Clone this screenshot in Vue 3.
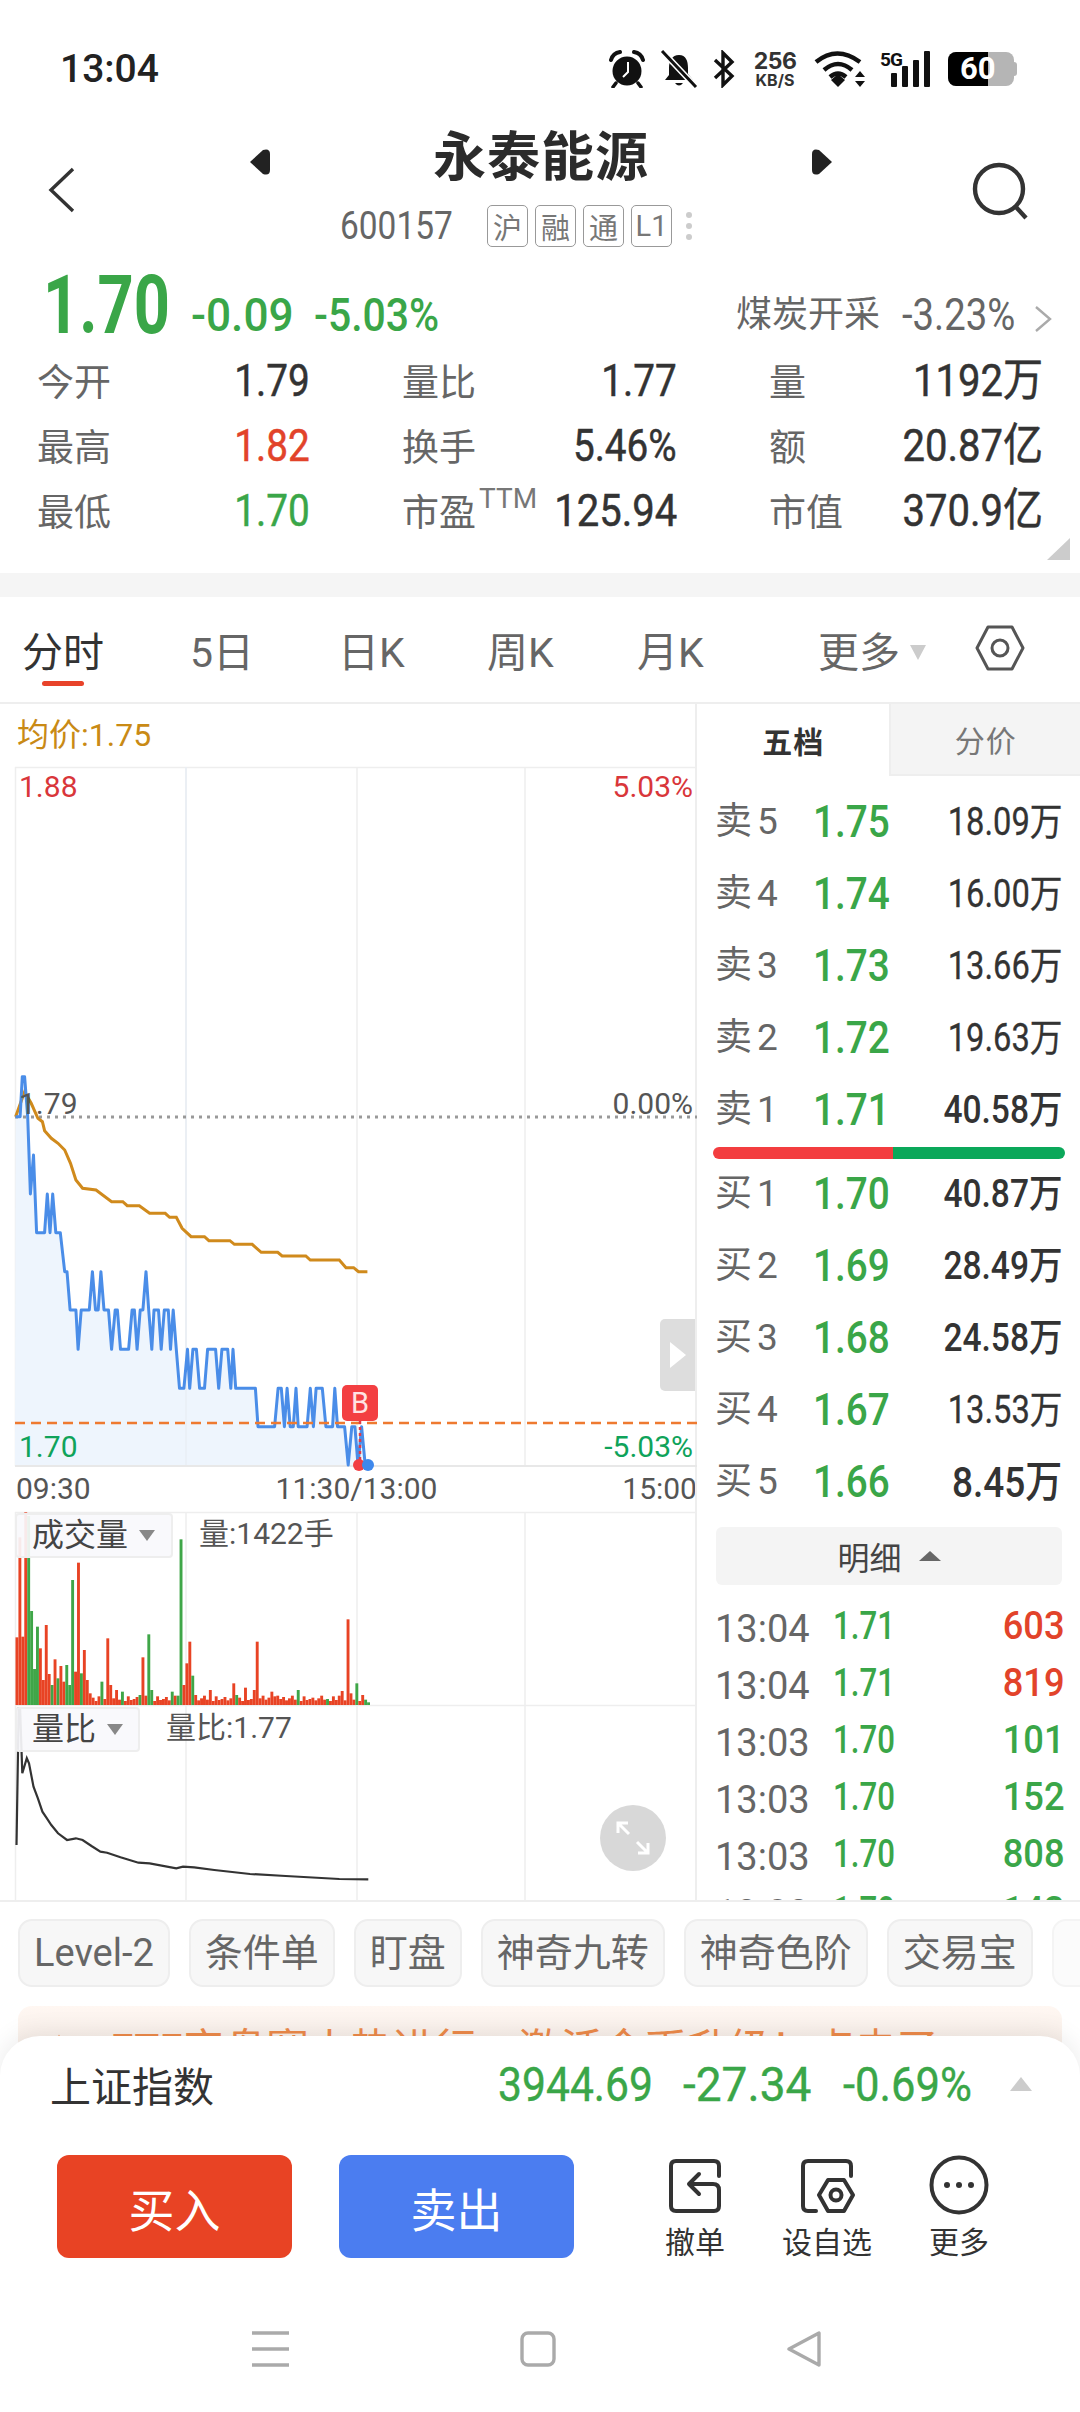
<template>
  <div class="page">
    <!-- 状态栏 -->
    <div class="status">
      <span class="clock">13:04</span>
      <div class="status-icons">
        <svg width="38" height="38" viewBox="0 0 38 38">
          <circle cx="19" cy="21" r="14.5" fill="#111" />
          <path d="M3 10 Q5 3 12 2 M35 10 Q33 3 26 2" fill="none" stroke="#111" stroke-width="4" stroke-linecap="round" />
          <path d="M8 33 l-3 4 M30 33 l3 4" stroke="#111" stroke-width="3.5" stroke-linecap="round" />
          <path d="M20 12 V22 L15 27" fill="none" stroke="#fff" stroke-width="2" />
        </svg>
        <svg width="38" height="38" viewBox="0 0 38 38">
          <path d="M19 5 C26 5 28 11 28 18 L28 24 L33 30 H5 L9 25 L9 18 C9 11 12 5 19 5 Z" fill="#111" />
          <path d="M15 33 H23 Q19 38 15 33 Z" fill="#111" />
          <path d="M2 1 L36 37" stroke="#fff" stroke-width="6" />
          <path d="M2 1 L36 37" stroke="#111" stroke-width="3" />
        </svg>
        <svg width="24" height="38" viewBox="0 0 24 38">
          <path d="M3 10 L20 26 L11 35 V3 L20 12 L3 28" fill="none" stroke="#111" stroke-width="3.4" />
        </svg>
        <div class="speed"><b>256</b><i>KB/S</i></div>
        <svg width="52" height="38" viewBox="0 0 52 38">
          <path d="M2 12 Q23 -5 46 12 M10 20 Q24 8 38 20 M16 27 Q24 20 32 27" fill="none" stroke="#111" stroke-width="4.4" />
          <path d="M17 30 L24 24 L31 30 L24 37 Z" fill="#111" />
          <path d="M41 27 L46 21 L51 27 Z M41 31 H51 L46 37 Z" fill="#111" />
        </svg>
        <div class="signal">
          <span class="five-g">5G</span>
          <svg width="40" height="36" viewBox="0 0 40 36">
            <rect x="1" y="22" width="6" height="14" rx="1" fill="#111" />
            <rect x="12" y="15" width="6" height="21" rx="1" fill="#111" />
            <rect x="23" y="9" width="6" height="27" rx="1" fill="#111" />
            <rect x="34" y="0" width="6" height="36" rx="1" fill="#111" />
          </svg>
        </div>
        <div class="battery">
          <div class="battery-fill"></div>
          <span>60</span>
          <i class="battery-cap"></i>
        </div>
      </div>
    </div>

    <!-- 标题 -->
    <div class="head">
      <svg class="back" width="28" height="46" viewBox="0 0 28 46">
        <path d="M25 2 L3 23 L25 44" fill="none" stroke="#333" stroke-width="3.4" />
      </svg>
      <div class="head-mid">
        <div class="title-row">
          <svg class="flip" width="22" height="26" viewBox="0 0 22 26"><path d="M1 13 L14 1 Q21 -1 21 5 V21 Q21 27 14 25 Z" fill="#222" /></svg>
          <span class="title">永泰能源</span>
          <svg class="flip" width="22" height="26" viewBox="0 0 22 26"><path d="M21 13 L8 1 Q1 -1 1 5 V21 Q1 27 8 25 Z" fill="#222" /></svg>
        </div>
        <div class="code-row">
          <span class="fit code"><span>600157</span></span>
          <span v-for="t in tags" :key="t" class="tag">{{ t }}</span>
          <span class="dots"><i></i><i></i><i></i></span>
        </div>
      </div>
      <svg class="search" width="58" height="58" viewBox="0 0 58 58">
        <circle cx="27" cy="27" r="24" fill="none" stroke="#333" stroke-width="4.4" />
        <path d="M43 44 L54 56" stroke="#333" stroke-width="4.4" />
      </svg>
    </div>

    <!-- 价格 -->
    <div class="quote">
      <span class="fit price-big"><span>1.70</span></span>
      <span class="chg first">-0.09</span>
      <span class="fit chg pct"><span>-5.03%</span></span>
      <span class="sector">煤炭开采</span>
      <span class="fit sector-chg"><span>-3.23%</span></span>
      <svg width="18" height="26" viewBox="0 0 18 26">
        <path d="M2 1 L16 13 L2 25" fill="none" stroke="#aaa" stroke-width="2.4" />
      </svg>
    </div>

    <div class="stats">
      <div v-for="s in stats" :key="s.k" class="stat">
        <span class="stat-k">{{ s.k }}<sup v-if="s.sup">{{ s.sup }}</sup></span>
        <span class="stat-v" :class="s.c">{{ s.v }}</span>
      </div>
      <i class="corner"></i>
    </div>
    <div class="band"></div>

    <!-- 周期切换 -->
    <div class="tabs">
      <span v-for="t in periods" :key="t.n" class="tab" :class="{ on: t.on }" :style="{ width: t.w + 'px' }">{{ t.n }}</span>
      <i class="more-arrow"></i>
      <svg class="hex" width="50" height="46" viewBox="0 0 50 46">
        <path d="M13 2 H37 L48 23 L37 44 H13 L2 23 Z" fill="none" stroke="#555" stroke-width="3" stroke-linejoin="round" />
        <circle cx="25" cy="23" r="8" fill="none" stroke="#555" stroke-width="3" />
      </svg>
    </div>

    <div class="market">
      <!-- 左侧分时 -->
      <div class="left">
        <div class="avg">均价:1.75</div>
        <div class="pane main">
          <svg width="697" height="700" viewBox="0 0 697 700">
            <path d="M15.500 0 V699 M186 0 V699 M357 0 V699 M525 0 V699 M15 .5 H697" stroke="#eee" stroke-width="1.500" fill="none" />
            <path :d="priceFill" fill="#eef5fd" />
            <path d="M186 0 V699" stroke="#e8eef5" stroke-width="1.500" />
            <path d="M15 699 H697" stroke="#e8e8e8" stroke-width="2" />
            <path d="M15 350 H697" stroke="#999" stroke-width="3" stroke-dasharray="3 5" />
            <path :d="avgPath" fill="none" stroke="#d08a1c" stroke-width="3" />
            <path :d="pricePath" fill="none" stroke="#4a8de8" stroke-width="3" stroke-linejoin="round" />
            <path d="M15 656 H697" stroke="#ee7a30" stroke-width="2.400" stroke-dasharray="10 6" />
            <path d="M360 654 V698" stroke="#e23a48" stroke-width="2.500" stroke-dasharray="3 3" />
            <circle cx="359" cy="698" r="6" fill="#f33f42" />
            <circle cx="368" cy="698" r="6" fill="#3f88ec" />
          </svg>
          <span class="lb l red" style="top: 3px">1.88</span>
          <span class="lb r red" style="top: 3px">5.03%</span>
          <span class="lb l gray" style="top: 320px">1.79</span>
          <span class="lb r gray" style="top: 320px">0.00%</span>
          <span class="lb l green" style="top: 663px">1.70</span>
          <span class="lb r green" style="top: 663px">-5.03%</span>
          <span class="b-mark">B</span>
          <span class="side-arrow"><i></i></span>
        </div>
        <div class="times"><span>09:30</span><span>11:30/13:00</span><span>15:00</span></div>
        <div class="pane vol">
          <svg width="697" height="194" viewBox="0 0 697 194">
            <path d="M15.500 0 V194 M186 0 V194 M357 0 V194 M525 0 V194 M15 .5 H697 M15 193.500 H697" stroke="#eee" stroke-width="1.500" fill="none" />
            <rect v-for="b in bars" :key="b.x" :x="b.x" :y="193 - b.h" width="2.900" :height="b.h" :fill="b.c" />
          </svg>
          <div class="legend vol-lg">成交量<i></i></div>
          <span class="legend-val" style="left: 199px">量:1422手</span>
        </div>
        <div class="pane ratio">
          <svg width="697" height="194" viewBox="0 0 697 194">
            <path d="M15.500 0 V194 M186 0 V194 M357 0 V194 M525 0 V194" stroke="#eee" stroke-width="1.500" fill="none" />
            <path :d="ratioPath" fill="none" stroke="#333" stroke-width="2.200" />
          </svg>
          <div class="legend ratio-lg">量比<i></i></div>
          <span class="legend-val" style="left: 166px">量比:1.77</span>
          <span class="expand">
            <svg width="36" height="36" viewBox="0 0 36 36">
              <path d="M3 13 V3 H13 M3 3 L14 14 M33 23 V33 H23 M33 33 L22 22" fill="none" stroke="#fff" stroke-width="3" />
            </svg>
          </span>
        </div>
      </div>

      <!-- 右侧盘口 -->
      <div class="right">
        <div class="book-tabs">
          <span class="bt on">五档</span>
          <span class="bt">分价</span>
        </div>
        <div v-for="r in asks" :key="r.l" class="lv">
          <span class="lv-l">{{ r.l }}</span><span class="lv-p">{{ r.p }}</span><span class="lv-q" :class="r.s">{{ r.q }}</span>
        </div>
        <div class="pk"></div>
        <div v-for="r in bids" :key="r.l" class="lv">
          <span class="lv-l">{{ r.l }}</span><span class="lv-p">{{ r.p }}</span><span class="lv-q" :class="r.s">{{ r.q }}</span>
        </div>
        <div class="detail">明细<i></i></div>
        <div v-for="(t, i) in ticks" :key="i" class="tick">
          <span class="tk-t">{{ t.t }}</span><span class="tk-p">{{ t.p }}</span><span class="tk-v" :class="t.c">{{ t.v }}</span>
        </div>
      </div>
    </div>

    <div class="chips">
      <span v-for="c in chips" :key="c" class="chip">{{ c }}</span>
      <span class="chip ghost"></span>
    </div>

    <div class="banner">
      <svg width="44" height="40" viewBox="0 0 44 40">
        <path d="M4 30 L14 8 L24 30 M14 8 V36" fill="none" stroke="#ee8a4a" stroke-width="3" />
      </svg>
      <span>ETF实盘赛火热进行，激活金币升级！点击了</span>
      <span class="banner-x">×</span>
    </div>

    <!-- 底部面板 -->
    <div class="sheet">
      <div class="index">
        <span class="index-name">上证指数</span>
        <span class="fit iv1"><span>3944.69</span></span>
        <span class="fit iv2"><span>-27.34</span></span>
        <span class="fit iv3"><span>-0.69%</span></span>
        <i class="index-arrow"></i>
      </div>
      <div class="actions">
        <span class="btn buy">买入</span>
        <span class="btn sell">卖出</span>
        <div class="act a1">
          <svg width="56" height="56" viewBox="0 0 56 56">
            <path d="M52 18 V8 Q52 3 47 3 H9 Q4 3 4 8 V48 Q4 53 9 53 H47 Q52 53 52 48 V32 Q52 26 46 26 H24 M32 16 L22 26 L32 36" fill="none" stroke="#333" stroke-width="4" stroke-linecap="round" stroke-linejoin="round" />
          </svg>
          <span>撤单</span>
        </div>
        <div class="act a2">
          <svg width="56" height="56" viewBox="0 0 56 56">
            <path d="M52 18 V8 Q52 3 47 3 H9 Q4 3 4 8 V48 Q4 53 9 53 H17" fill="none" stroke="#333" stroke-width="4" stroke-linecap="round" />
            <path d="M29 22 H45 L54 37 L45 53 H29 L20 37 Z" fill="none" stroke="#333" stroke-width="4" stroke-linejoin="round" />
            <circle cx="37" cy="37" r="5.500" fill="none" stroke="#333" stroke-width="4" />
          </svg>
          <span>设自选</span>
        </div>
        <div class="act a3">
          <svg width="60" height="60" viewBox="0 0 60 60">
            <circle cx="30" cy="30" r="27.500" fill="none" stroke="#333" stroke-width="4" />
            <circle cx="18" cy="30" r="3" fill="#333" /><circle cx="30" cy="30" r="3" fill="#333" /><circle cx="42" cy="30" r="3" fill="#333" />
          </svg>
          <span>更多</span>
        </div>
      </div>
      <div class="nav">
        <svg width="38" height="36" viewBox="0 0 38 36"><path d="M0 2 H37 M0 18 H37 M0 34 H37" stroke="#aaa" stroke-width="3.400" /></svg>
        <svg width="38" height="36" viewBox="0 0 38 36"><rect x="3" y="2" width="32" height="32" rx="6" fill="none" stroke="#aaa" stroke-width="3.400" /></svg>
        <svg width="38" height="36" viewBox="0 0 38 36"><path d="M34 2 V34 L4 18 Z" fill="none" stroke="#aaa" stroke-width="3.400" stroke-linejoin="round" /></svg>
      </div>
    </div>
  </div>
</template>

<script setup>
const tags = ['沪', '融', '通', 'L1']

const stats = [
  { k: '今开', v: '1.79' },
  { k: '量比', v: '1.77' },
  { k: '量', v: '1192万', c: 'w' },
  { k: '最高', v: '1.82', c: 'red' },
  { k: '换手', v: '5.46%' },
  { k: '额', v: '20.87亿', c: 'w' },
  { k: '最低', v: '1.70', c: 'green' },
  { k: '市盈', sup: 'TTM', v: '125.94', c: 'w' },
  { k: '市值', v: '370.9亿', c: 'w' },
]

const periods = [
  { n: '分时', w: 168, on: true },
  { n: '5日', w: 148 },
  { n: '日K', w: 149 },
  { n: '周K', w: 150 },
  { n: '月K', w: 181 },
  { n: '更多', w: 92 },
]

const asks = [
  { l: '卖5', p: '1.75', q: '18.09万' },
  { l: '卖4', p: '1.74', q: '16.00万' },
  { l: '卖3', p: '1.73', q: '13.66万' },
  { l: '卖2', p: '1.72', q: '19.63万' },
  { l: '卖1', p: '1.71', q: '40.58万', s: 'wide' },
]
const bids = [
  { l: '买1', p: '1.70', q: '40.87万', s: 'wide' },
  { l: '买2', p: '1.69', q: '28.49万', s: 'wide' },
  { l: '买3', p: '1.68', q: '24.58万', s: 'wide' },
  { l: '买4', p: '1.67', q: '13.53万' },
  { l: '买5', p: '1.66', q: '8.45万', s: 'big' },
]
const ticks = [
  { t: '13:04', p: '1.71', v: '603', c: 'red' },
  { t: '13:04', p: '1.71', v: '819', c: 'red' },
  { t: '13:03', p: '1.70', v: '101', c: 'green' },
  { t: '13:03', p: '1.70', v: '152', c: 'green' },
  { t: '13:03', p: '1.70', v: '808', c: 'green' },
  { t: '13:03', p: '1.70', v: '143', c: 'green' },
]

const chips = ['Level-2', '条件单', '盯盘', '神奇九转', '神奇色阶', '交易宝']

// 折线点是从参考图量出来的，x 按 2.24 倍、y 按 3 倍记录
const priceRaw = [
  [35, 230], [45, 230], [50, 110], [55, 110], [62, 230], [68, 462], [75, 345], [82, 578], [100, 578],
  [106, 462], [112, 578], [118, 462], [125, 578], [135, 578], [145, 695], [150, 695], [157, 810], [170, 810],
  [175, 928], [182, 810], [200, 810], [207, 695], [214, 810], [220, 810], [226, 695], [233, 810], [243, 810],
  [250, 928], [258, 810], [263, 810], [270, 928], [288, 928], [296, 810], [301, 810], [307, 928], [314, 810],
  [320, 810], [327, 695], [333, 810], [340, 928], [345, 810], [355, 810], [361, 928], [368, 810], [377, 810],
  [382, 928], [388, 810], [395, 928], [402, 1045], [412, 1045], [420, 928], [425, 1045], [432, 928], [440, 928],
  [447, 1045], [458, 1045], [465, 928], [483, 928], [490, 1045], [497, 928], [510, 928], [517, 1045], [522, 928],
  [528, 1045], [572, 1045], [578, 1160], [615, 1160], [623, 1045], [630, 1045], [637, 1160], [643, 1045],
  [650, 1160], [657, 1160], [663, 1045], [668, 1160], [688, 1160], [695, 1045], [702, 1160], [708, 1045],
  [722, 1045], [730, 1160], [745, 1160], [750, 1045], [756, 1160], [772, 1160], [780, 1275], [788, 1160],
  [795, 1160], [802, 1275], [810, 1160], [818, 1275], [825, 1275],
]
const avgRaw = [
  [35, 230], [55, 155], [70, 190], [85, 235], [95, 245], [100, 272], [115, 295], [130, 310], [145, 330],
  [158, 370], [170, 420], [185, 445], [215, 450], [250, 485], [275, 485], [285, 497], [312, 497], [335, 520],
  [370, 520], [380, 532], [395, 532], [408, 565], [428, 590], [458, 590], [468, 602], [515, 602], [525, 613],
  [565, 613], [585, 637], [622, 637], [632, 648], [685, 648], [695, 660], [760, 660], [775, 683], [792, 683],
  [803, 695], [823, 695],
]
const ratioRaw = [
  [37, 1065], [42, 655], [45, 655], [50, 850], [60, 805], [65, 820], [75, 890], [85, 925], [95, 965], [105, 985],
  [115, 1005], [130, 1030], [150, 1050], [170, 1045], [185, 1050], [205, 1068], [225, 1085], [240, 1088],
  [270, 1102], [310, 1118], [335, 1120], [395, 1135], [410, 1130], [435, 1132], [480, 1140], [560, 1152],
  [640, 1158], [760, 1167], [825, 1168],
]

const toPath = (pts, offset) =>
  pts.map((p, i) => `${i ? 'L' : 'M'}${(p[0] / 2.24).toFixed(1)} ${(offset + p[1] / 3).toFixed(1)}`).join(' ')

const pricePath = toPath(priceRaw, 273)
const avgPath = toPath(avgRaw, 273)
const priceFill = `${pricePath} L368 699 L15 699 Z`
// 量比面板从 1706 开始
const ratioPath = toPath(ratioRaw, 1490 - 1706)

// 成交量柱，高度按 3 倍记录，负数是绿柱
const volHead = [
  203, 503, 205, 578, -567, -282, -108, -235, 170, 75, 240, 93, -60, 137, -80, 117, 70, -120, -60, -375,
  100, 427, -95, 165, 75, 35,
]
const small = [18, 24, 14, 20, 28, 16, 22, 12, 26, 15]
const spikes = [
  [225, -70], [238, 200], [245, 60], [255, 45], [268, -40], [308, -30], [318, 143], [332, -212], [340, -45],
  [383, -40], [395, -28], [403, -497], [408, 60], [415, 125], [421, 190], [428, -88], [434, 30], [470, 45],
  [520, 65], [528, -30], [546, 52], [565, 45], [573, 190], [604, 40], [620, 28], [667, -45], [700, 22],
  [730, -18], [755, 28], [765, 42], [775, 257], [785, 35], [799, -65], [808, 30], [818, -16], [825, -8],
]
const volRaw = Array.from({ length: 121 }, (_, i) => volHead[i] ?? small[i % 10])
spikes.forEach(([zx, h]) => {
  volRaw[Math.round((zx - 35) / 6.56)] = h
})
const bars = volRaw.map((v, i) => ({
  x: +(15.5 + i * 2.93).toFixed(2),
  h: Math.abs(v) / 3,
  c: v < 0 ? '#3fa648' : '#e84324',
}))
</script>

<style>
html, body { margin: 0; background: #fff; }
</style>

<style scoped>
.page {
  position: relative;
  width: 1080px;
  height: 2412px;
  overflow: hidden;
  background: #fff;
  color: #333;
  font-family: Roboto, "Noto Sans CJK SC", sans-serif;
}

/* 参考图的数字字体偏窄，这里用 scaleX 压一下，外层盒子给压缩后的宽度 */
.fit { display: inline-block; white-space: nowrap; flex: none; }
.fit > span { display: inline-block; transform-origin: 0 50%; }

.status {
  height: 100px;
  box-sizing: border-box;
  padding: 46px 66px 0 60px;
  display: flex;
  justify-content: space-between;
  align-items: flex-start;
}
.clock { font-size: 39px; font-weight: 500; line-height: 46px; color: #222; }
.status-icons { display: flex; align-items: center; gap: 14px; height: 46px; }
.speed { display: flex; flex-direction: column; align-items: center; width: 50px; font-family: Inter, Roboto, sans-serif; }
.speed b { font-size: 23px; line-height: 21px; font-weight: 700; letter-spacing: -.5px; }
.speed i { font-size: 16px; line-height: 16px; font-style: normal; font-weight: 700; }
.signal { width: 50px; position: relative; height: 38px; }
.five-g { position: absolute; left: 0; top: 1px; font-size: 19px; font-weight: 700; color: #111; line-height: 18px; letter-spacing: -1px; }
.signal svg { display: block; margin-left: 10px; margin-top: 1px; }
.battery { position: relative; width: 66px; height: 34px; background: #b5b5b5; border-radius: 8px; margin-left: 4px; }
.battery-fill { position: absolute; left: 0; top: 0; bottom: 0; width: 40px; background: #000; border-radius: 8px 0 0 8px; }
.battery span { position: absolute; left: 12px; top: 0; line-height: 34px; font-size: 31px; font-weight: 700; color: #fff; }
.battery-cap { position: absolute; right: -3px; top: 10px; width: 3px; height: 14px; background: #b5b5b5; border-radius: 0 3px 3px 0; }

.head { display: flex; height: 147px; box-sizing: border-box; padding: 28px 50px 0 48px; }
.back { margin-top: 39px; flex: none; }
.search { margin-top: 34px; flex: none; }
.head-mid { flex: 1; display: flex; flex-direction: column; align-items: center; padding-left: 34px; }
.title-row { display: flex; align-items: center; justify-content: space-between; width: 584px; height: 60px; }
.flip { margin-top: 8px; }
.title { font-size: 53px; font-weight: 700; letter-spacing: 1px; color: #2b2b2b; line-height: 60px; }
.code-row { display: flex; align-items: center; gap: 7px; margin-top: 17px; height: 42px; margin-right: 50px; }
.code { width: 113px; margin-right: 27px; font-size: 38px; color: #666; }
.code > span { transform: scaleX(.88); }
.tag {
  width: 41px; height: 42px; box-sizing: border-box;
  border: 1.500px solid #999; border-radius: 5px;
  display: flex; align-items: center; justify-content: center;
  font-size: 29px; color: #777;
}
.dots { display: flex; flex-direction: column; gap: 5px; margin-left: 7px; }
.dots i { width: 6px; height: 6px; border-radius: 50%; background: #ccc; }

.quote {
  display: flex; align-items: flex-end;
  height: 100px; box-sizing: border-box;
  padding: 0 28px 0 43px;
}
.price-big { width: 127px; font-size: 82px; line-height: 84px; font-weight: 700; color: #3aa648; }
.price-big > span { transform: scaleX(.77); }
.chg { font-size: 46px; font-weight: 500; line-height: 54px; color: #3aa648; margin-left: 21px; margin-bottom: 5px; }
.chg.first { transform: scaleX(.96); transform-origin: 0 50%; margin-right: -4px; }
.chg.pct { width: 125px; margin-left: 20px; }
.chg.pct > span { transform: scaleX(.89); }
.sector { margin-left: auto; font-size: 36px; color: #666; line-height: 54px; margin-bottom: 5px; }
.sector-chg { width: 114px; font-size: 44px; color: #666; line-height: 54px; margin: 0 18px 5px 22px; }
.sector-chg > span { transform: scaleX(.87); }
.quote svg { margin-bottom: 15px; }

.stats {
  position: relative;
  display: grid;
  grid-template-columns: 273px 367px 1fr;
  grid-auto-rows: 65px;
  height: 226px;
  padding: 1px 37px 0 37px;
  box-sizing: border-box;
  width: 1080px;
}
.stat { display: flex; justify-content: space-between; align-items: center; }
.stat:nth-child(3n + 2), .stat:nth-child(3n) { padding-left: 92px; }
.stat-k { font-size: 37px; line-height: 46px; color: #666; position: relative; top: 3px; white-space: nowrap; }
.stat-k sup { font-size: 28px; line-height: 0; vertical-align: 18px; margin-left: 3px; color: #777; }
.stat-v {
  font-size: 45px; line-height: 50px; color: #333; white-space: nowrap;
  transform: scaleX(.86); transform-origin: 100% 50%;
  -webkit-text-stroke: .5px currentColor;
}
.stat-v.w { transform: scaleX(.89); }
.corner {
  position: absolute; right: 10px; bottom: 13px; width: 0; height: 0;
  border-left: 23px solid transparent; border-bottom: 22px solid #ccc;
}
.band { height: 24px; background: #f5f5f5; }

.tabs {
  position: relative;
  height: 107px; box-sizing: border-box;
  border-bottom: 2px solid #eee;
  display: flex; align-items: flex-start;
  padding: 33px 0 0 22px;
}
.tab { font-size: 41px; line-height: 46px; color: #666; flex: none; }
.tab.on { color: #333; position: relative; }
.tab.on::after {
  content: ""; position: absolute; left: 20px; top: 51px;
  width: 42px; height: 5px; border-radius: 3px; background: #e8432a;
}
.more-arrow {
  width: 0; height: 0; margin-top: 15px;
  border-left: 8px solid transparent; border-right: 8px solid transparent; border-top: 15px solid #ccc;
}
.hex { position: absolute; left: 975px; top: 28px; }

.market { display: flex; height: 1196px; }
.left { width: 697px; flex: none; }
.avg { height: 63px; box-sizing: border-box; padding: 14px 0 0 17px; font-size: 32px; line-height: 34px; color: #c98a15; }
.pane { position: relative; }
.pane svg { display: block; overflow: visible; }
.main { height: 699px; }
.lb { position: absolute; font-size: 30px; line-height: 34px; }
.lb.l { left: 19px; }
.lb.r { right: 4px; }
.b-mark {
  position: absolute; left: 342px; top: 618px; width: 36px; height: 36px;
  border-radius: 5px; background: #f33f42; color: #ffe3e3;
  font-size: 29px; line-height: 36px; text-align: center;
}
.side-arrow {
  position: absolute; right: 2px; top: 552px; width: 35px; height: 72px;
  background: #ddd; border-radius: 5px 0 0 5px;
  display: flex; align-items: center; justify-content: center;
}
.side-arrow i { width: 0; height: 0; border-left: 16px solid #fff; border-top: 13px solid transparent; border-bottom: 13px solid transparent; }
.times { height: 46px; display: flex; justify-content: space-between; padding: 0 0 0 16px; font-size: 30px; line-height: 46px; color: #555; }
.vol, .ratio { height: 194px; }
.legend {
  position: absolute; left: 15px; top: 1px; height: 45px; box-sizing: border-box;
  background: rgba(248, 249, 252, .92); border: 2px solid #eee; border-radius: 4px;
  padding-left: 15px; font-size: 32px; line-height: 41px; color: #444;
}
.vol-lg { width: 158px; }
.ratio-lg { width: 125px; }
.legend i {
  display: inline-block; width: 0; height: 0; margin-left: 11px; vertical-align: 5px;
  border-left: 8px solid transparent; border-right: 8px solid transparent; border-top: 11px solid #888;
}
.legend-val { position: absolute; top: 4px; font-size: 30px; line-height: 36px; color: #555; }
.expand {
  position: absolute; left: 600px; top: 99px; width: 66px; height: 66px; border-radius: 50%;
  background: #d8d8d8; display: flex; align-items: center; justify-content: center;
}

.right { flex: 1; border-left: 2px solid #eee; margin-left: -2px; overflow: hidden; }
.book-tabs { display: flex; height: 72px; margin-bottom: 10px; }
.bt { flex: 1; display: flex; align-items: center; justify-content: center; font-size: 30px; letter-spacing: 1px; color: #777; background: #f4f4f4; border: 2px solid #eee; box-sizing: border-box; border-right: 0; border-top: 0; }
.bt.on { flex: 1.020; background: #fff; border: 0; font-weight: 700; color: #333; }
.lv { display: flex; align-items: center; height: 72px; padding: 0 18px; }
.lv-l { width: 98px; flex: none; font-size: 37px; line-height: 46px; letter-spacing: 5px; color: #666; white-space: nowrap; }
.lv-p { font-size: 45px; line-height: 50px; font-weight: 500; color: #3aa648; transform: scaleX(.86); transform-origin: 0 50%; }
.lv-q {
  margin-left: auto; font-size: 38px; line-height: 46px; color: #333; white-space: nowrap;
  transform: scaleX(.86); transform-origin: 100% 50%;
  -webkit-text-stroke: .3px currentColor;
}
.lv-q.wide { font-size: 39px; font-weight: 500; -webkit-text-stroke: 0; }
.lv-q.big { font-size: 43px; font-weight: 500; -webkit-text-stroke: 0; }
.pk { height: 12px; margin: 1px 15px -1px 16px; border-radius: 6px; background: linear-gradient(90deg, #f33d3f 0 51%, #0ba85a 51% 100%); }
.detail {
  height: 58px; margin: 9px 18px 12px 19px; border-radius: 6px; background: #f4f4f4;
  display: flex; align-items: center; justify-content: center; font-size: 32px; color: #444;
}
.detail i { width: 0; height: 0; margin-left: 17px; border-left: 11px solid transparent; border-right: 11px solid transparent; border-bottom: 10px solid #666; }
.tick { display: flex; align-items: center; height: 57px; padding: 0 16px 0 18px; }
.tk-t { width: 118px; flex: none; font-size: 38px; color: #666; position: relative; top: 3px; }
.tk-p { font-size: 39px; font-weight: 500; color: #3aa648; transform: scaleX(.8); transform-origin: 0 50%; }
.tk-v { margin-left: auto; font-size: 39px; font-weight: 500; transform: scaleX(.93); transform-origin: 100% 50%; }

/* 放在后面，盖过 stat-v / tk-v 的默认色 */
.red { color: #e2432a; }
.green { color: #3aa648; }
.gray { color: #555; }
.lb.red { color: #d9363a; }
.lb.green.r { color: #0fa35a; }
.lb.green.l { color: #0fa35a; }

.chips {
  display: flex; gap: 19px;
  padding: 17px 0 19px 18px;
  border-top: 2px solid #eee;
  overflow: hidden;
}
.chip {
  flex: none; height: 68px; box-sizing: border-box; padding: 0 14px;
  border: 2px solid #eee; border-radius: 14px; background: #f7f7f7;
  font-size: 38px; line-height: 64px; color: #666;
}
.chip.ghost { width: 60px; border-color: #f4f4f4; background: #fbfbfb; }
.banner {
  margin: 0 18px; height: 60px; box-sizing: border-box; padding: 20px 42px 0 27px;
  border-radius: 14px; background: linear-gradient(#fff7f2, #f4ebe5);
  display: flex; gap: 21px; font-size: 42px; line-height: 48px; color: #ee8a4a; white-space: nowrap; overflow: hidden;
}
.banner svg { flex: none; margin-top: 4px; }
.banner-x { margin-left: auto; font-size: 60px; }

.sheet {
  position: absolute; left: 0; right: 0; bottom: 0; height: 376px;
  background: #fff; border-radius: 40px 40px 0 0;
  box-shadow: 0 -4px 24px rgba(0, 0, 0, .08);
}
.index { display: flex; align-items: center; height: 96px; padding: 0 48px 0 50px; box-sizing: border-box; font-size: 49px; color: #3aa648; -webkit-text-stroke: .4px currentColor; }
.index-name { font-size: 41px; color: #333; margin-right: auto; -webkit-text-stroke: 0; }
.iv1 { width: 157px; margin-right: 28px; }
.iv1 > span { transform: scaleX(.87); }
.iv2 { width: 130px; margin-right: 30px; }
.iv2 > span { transform: scaleX(.94); }
.iv3 { width: 132px; }
.iv3 > span { transform: scaleX(.89); }
.index-arrow { width: 0; height: 0; margin-left: 35px; border-left: 11px solid transparent; border-right: 11px solid transparent; border-bottom: 14px solid #ccc; }
.actions { display: flex; padding: 23px 0 0 57px; }
.btn {
  width: 235px; height: 103px; border-radius: 12px; color: #fff; font-size: 46px;
  display: flex; align-items: center; justify-content: center;
}
.buy { background: #e84324; }
.sell { background: #4b7df0; margin-left: 47px; }
.act { display: flex; flex-direction: column; align-items: center; width: 100px; font-size: 30px; line-height: 36px; color: #333; }
.act svg { margin-bottom: 11px; }
.act.a1 { margin-left: 71px; margin-top: 3px; }
.act.a2 { margin-left: 32px; margin-top: 3px; }
.act.a3 { margin-left: 32px; }
.act.a3 svg { margin-bottom: 10px; }
.nav { display: flex; justify-content: space-between; padding: 70px 257px 0 252px; }
</style>
